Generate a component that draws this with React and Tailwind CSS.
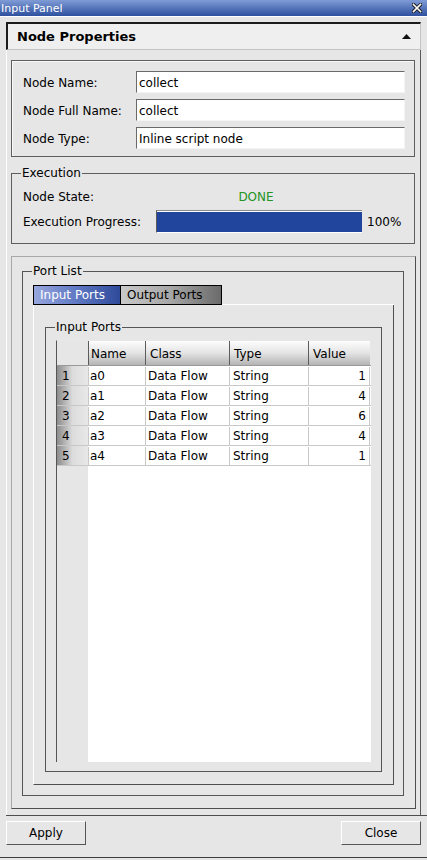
import React from 'react';

const rows = [
  { n: 1, name: 'a0', cls: 'Data Flow', type: 'String', value: '1' },
  { n: 2, name: 'a1', cls: 'Data Flow', type: 'String', value: '4' },
  { n: 3, name: 'a2', cls: 'Data Flow', type: 'String', value: '6' },
  { n: 4, name: 'a3', cls: 'Data Flow', type: 'String', value: '4' },
  { n: 5, name: 'a4', cls: 'Data Flow', type: 'String', value: '1' },
];

function Field({ label, value }) {
  return (
    <div className="flex items-center h-[22px]">
      <span className="w-[113px] shrink-0 pt-[1px]">{label}</span>
      <div className="flex-1 h-[22px] bg-white border-t border-l border-t-[#6a6a6a] border-l-[#6a6a6a] border-b border-r border-b-[#f4f4f4] border-r-[#f4f4f4] flex items-center pl-[2px] pt-[1px]">
        {value}
      </div>
    </div>
  );
}

function HeaderCell({ w, pl, children }) {
  return (
    <div
      className={`${w} ${pl} h-full border-l border-l-[#5c5c5c] bg-gradient-to-b from-[#fdfdfd] via-[#e4e4e4] to-[#b4b4b4] flex items-center pt-[1px]`}
    >
      {children}
    </div>
  );
}

export default function App() {
  return (
    <div className="w-[427px] h-[860px] bg-[#e6e6e6] font-['DejaVu_Sans',sans-serif] text-[12px] text-black flex flex-col overflow-hidden">
      {/* window title */}
      <div className="h-[17px] shrink-0 bg-gradient-to-b from-[#809cd6] to-[#2f509e] border-b border-b-white flex items-center justify-between pl-[1px] pr-[5px]">
        <span className="text-white text-[11px] leading-none">Input Panel</span>
        <svg width="10" height="10" viewBox="0 0 10 10">
          <path d="M1.5 1.5 L8.5 8.5 M8.5 1.5 L1.5 8.5" stroke="#1a1a1a" strokeWidth="3.4" strokeLinecap="square" />
          <path d="M1.5 1.5 L8.5 8.5 M8.5 1.5 L1.5 8.5" stroke="#ffffff" strokeWidth="1.6" strokeLinecap="square" />
        </svg>
      </div>

      <div className="flex-1 flex flex-col px-[6px] pt-[5px]">
        {/* section header */}
        <div className="h-[28px] shrink-0 bg-[#efefef] border-t-2 border-l-2 border-t-[#1c1c1c] border-l-[#1c1c1c] border-r border-b border-r-[#c4c4c4] border-b-[#c4c4c4] flex items-center justify-between pl-[9px] pr-[9px]">
          <span className="font-bold text-[13px] pt-[1px]">Node Properties</span>
          <svg width="9" height="6" viewBox="0 0 9 6">
            <polygon points="4.5,0 9,5 0,5" fill="#111" />
          </svg>
        </div>

        {/* content frame */}
        <div className="flex-1 flex flex-col border-l border-l-white border-r border-r-[#5a5a5a] px-[4px] pt-[10px]">
          {/* node properties */}
          <div className="mr-[1px] border border-[#5e5e5e] shadow-[inset_1px_1px_0_#f8f8f8] pt-[10px] pb-[7px] pl-[11px] pr-[9px] flex flex-col gap-[6px]">
            <Field label="Node Name:" value="collect" />
            <Field label="Node Full Name:" value="collect" />
            <Field label="Node Type:" value="Inline script node" />
          </div>

          {/* execution */}
          <fieldset className="mt-[9px] mr-[1px] border border-[#5e5e5e] px-[9px] pb-[10px]">
            <legend className="px-[1px] leading-[14px]">Execution</legend>
            <div className="pl-[2px]">
              <div className="mt-[9px] h-[16px] flex items-center">
                <span className="w-[133px]">Node State:</span>
                <span className="w-[200px] text-center text-[#239323]">DONE</span>
              </div>
              <div className="mt-[5px] h-[23px] flex items-center">
                <span className="w-[133px] shrink-0">Execution Progress:</span>
                <div className="w-[206px] h-[23px] border-t border-t-[#8a8a8a] border-l border-l-[#5a5a5a] border-b border-b-white bg-white flex">
                  <div className="flex-1 bg-[#21449c] mt-[1px]" />
                </div>
                <span className="ml-[5px]">100%</span>
              </div>
            </div>
          </fieldset>

          {/* port list frame */}
          <div className="mt-[12px] h-[553px] border-t border-l border-t-[#a8a8a8] border-l-[#a8a8a8] border-b border-r border-b-[#4e4e4e] border-r-[#4e4e4e] pt-[7px] pl-[10px] pr-[11px]">
            <fieldset className="h-[532px] border border-[#555555] pl-[10px] pr-[9px] pb-[10px] flex flex-col">
              <legend className="px-[1px] ml-[-1px] leading-[14px]">Port List</legend>
              {/* tabs */}
              <div className="mt-[7px] h-[20px] flex">
                <div className="w-[88px] h-[20px] border border-black bg-gradient-to-r from-[#97a6dd] via-[#5f78c3] to-[#2f4a99] text-white flex items-center pl-[6px]">
                  Input Ports
                </div>
                <div className="w-[101px] h-[20px] border border-l-0 border-black bg-gradient-to-r from-[#c9c9c9] via-[#a6a6a6] to-[#6b6b6b] flex items-center pl-[6px]">
                  Output Ports
                </div>
                <div className="flex-1 border-b border-b-white" />
              </div>
              {/* tab pane */}
              <div className="flex-1 border-l border-l-white border-b border-r border-b-[#4e4e4e] border-r-[#4e4e4e] pt-[15px] pl-[11px] pr-[11px] pb-[12px] flex flex-col">
                <fieldset className="flex-1 border border-[#555555] pl-[10px] pr-[10px] pb-[9px] flex flex-col">
                  <legend className="px-[1px] ml-[-1px] leading-[14px]">Input Ports</legend>
                  <div className="mt-[6px] flex-1 flex border-l border-t border-l-[#555555] border-t-[#e8e8e8]">
                    {/* row header column */}
                    <div className="w-[31px] flex flex-col bg-[#e6e6e6]">
                      <div className="h-[25px] border-b border-b-[#9a9a9a]" />
                      {rows.map((r) => (
                        <div
                          key={r.n}
                          className="h-[20px] border-b border-b-[#c8c8c8] bg-gradient-to-r from-[#8c8c8c] via-[#dcdcdc] to-[#e8e8e8] flex items-center pl-[5px] pt-[1px]"
                        >
                          {r.n}
                        </div>
                      ))}
                    </div>
                    <div className="flex-1 flex flex-col bg-white">
                      <div className="h-[25px] shrink-0 flex border-b border-b-[#9a9a9a] bg-[#e6e6e6]">
                        <HeaderCell w="w-[57px]" pl="pl-[2px]">Name</HeaderCell>
                        <HeaderCell w="w-[84px]" pl="pl-[4px]">Class</HeaderCell>
                        <HeaderCell w="w-[79px]" pl="pl-[4px]">Type</HeaderCell>
                        <HeaderCell w="w-[62px]" pl="pl-[4px]">Value</HeaderCell>
                      </div>
                      {rows.map((r) => (
                        <div key={r.n} className="h-[20px] shrink-0 flex border-b border-b-[#c8c8c8] pt-[1px]">
                          <div className="w-[57px] border-l border-l-[#c8c8c8] pl-[1px] flex items-center">{r.name}</div>
                          <div className="w-[84px] border-l border-l-[#c8c8c8] pl-[2px] flex items-center">{r.cls}</div>
                          <div className="w-[79px] border-l border-l-[#c8c8c8] pl-[3px] flex items-center">{r.type}</div>
                          <div className="w-[62px] border-l border-r border-l-[#c8c8c8] border-r-[#c8c8c8] pr-[3px] flex items-center justify-end">
                            {r.value}
                          </div>
                        </div>
                      ))}
                    </div>
                  </div>
                </fieldset>
              </div>
            </fieldset>
          </div>
        </div>
      </div>

      {/* button bar */}
      <div className="h-[42px] shrink-0 ml-[6px] border-t border-t-[#4e4e4e] pt-[5px] flex justify-between pr-[6px]">
        <button className="w-[80px] h-[24px] border-t border-l border-t-white border-l-white border-b border-r border-b-[#555555] border-r-[#555555] bg-[#e6e6e6]">
          Apply
        </button>
        <button className="w-[80px] h-[24px] border-t border-l border-t-white border-l-white border-b border-r border-b-[#555555] border-r-[#555555] bg-[#e6e6e6]">
          Close
        </button>
      </div>
      <div className="h-[3px] shrink-0 border-t border-t-[#3c3c3c]" />
    </div>
  );
}
